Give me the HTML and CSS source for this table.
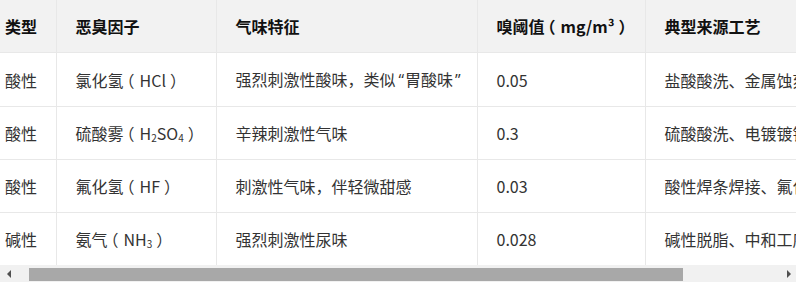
FILE: index.html
```html
<!DOCTYPE html>
<html lang="zh-CN">
<head>
<meta charset="utf-8">
<title>恶臭因子</title>
<link rel="stylesheet" href="styles.css">
</head>
<body>
<div class="table-box">
  <div class="viewport" id="viewport">
    <table class="odor-table">
      <colgroup>
        <col class="c-type">
        <col class="c-factor">
        <col class="c-desc">
        <col class="c-value">
        <col class="c-source">
      </colgroup>
      <thead>
        <tr>
          <th>类型</th>
          <th>恶臭因子</th>
          <th>气味特征</th>
          <th>嗅阈值<span class="po">（</span>mg/m³<span class="pc">）</span></th>
          <th>典型来源工艺</th>
        </tr>
      </thead>
      <tbody>
        <tr>
          <td>酸性</td>
          <td>氯化氢<span class="po">（</span>HCl<span class="pc">）</span></td>
          <td>强烈刺激性酸味，类似<span class="q qo">“</span>胃酸味<span class="q qc">”</span></td>
          <td>0.05</td>
          <td>盐酸酸洗、金属蚀刻</td>
        </tr>
        <tr>
          <td>酸性</td>
          <td>硫酸雾<span class="po">（</span>H<sub>2</sub>SO<sub>4</sub><span class="pc">）</span></td>
          <td>辛辣刺激性气味</td>
          <td>0.3</td>
          <td>硫酸酸洗、电镀镀铬</td>
        </tr>
        <tr>
          <td>酸性</td>
          <td>氟化氢<span class="po">（</span>HF<span class="pc">）</span></td>
          <td>刺激性气味，伴轻微甜感</td>
          <td>0.03</td>
          <td>酸性焊条焊接、氟化物处理</td>
        </tr>
        <tr>
          <td>碱性</td>
          <td>氨气<span class="po">（</span>NH<sub>3</sub><span class="pc">）</span></td>
          <td>强烈刺激性尿味</td>
          <td>0.028</td>
          <td>碱性脱脂、中和工序</td>
        </tr>
      </tbody>
    </table>
  </div>
  <div class="hscroll" aria-hidden="true">
    <div class="sb-btn"><span class="tri-left"></span></div>
    <div class="sb-track"><div class="sb-thumb"></div></div>
    <div class="sb-btn"><span class="tri-right"></span></div>
  </div>
</div>
<script src="script.js"></script>
</body>
</html>
```
FILE: styles.css
```css
html, body {
  margin: 0;
  padding: 0;
  background: #ffffff;
}
body {
  font-family: "Noto Sans CJK SC", "Noto Sans", sans-serif;
  font-size: 16px;
  color: #333333;
}
.table-box {
  width: 796px;
}
.viewport {
  width: 796px;
  height: 265px;
  overflow: hidden;
}
.odor-table {
  width: 932px;
  table-layout: fixed;
  border-collapse: collapse;
  border-spacing: 0;
}
.c-type { width: 70px; }
.c-factor { width: 160px; }
.c-desc { width: 261px; }
.c-value { width: 168px; }
.c-source { width: 273px; }
.odor-table th,
.odor-table td {
  padding: 15px 19px;
  line-height: 22px;
  text-align: left;
  white-space: nowrap;
  overflow: hidden;
  border-left: 1px solid #e8e8e8;
  border-bottom: 1px solid #e8e8e8;
}
.odor-table th:first-child,
.odor-table td:first-child {
  border-left: none;
}
.odor-table tbody tr:last-child td {
  border-bottom: none;
}
.odor-table th {
  background: #f2f2f2;
  color: #111111;
  font-weight: bold;
}
.odor-table sub {
  font-size: 10px;
  vertical-align: -2px;
  line-height: 0;
}
.po,
.pc {
  font-feature-settings: "halt" 1;
}
.po {
  padding: 0 5px 0 3px;
}
.pc {
  padding: 0 4px 0 4px;
}
.q {
  font-family: "Open Sans", "Noto Sans", sans-serif;
}
.qo {
  padding: 0 1px 0 3px;
}
.qc {
  padding: 0 0 0 2px;
}

/* horizontal scrollbar */
.hscroll {
  display: flex;
  height: 17px;
  background: #f1f1f1;
}
.sb-btn {
  width: 15px;
  flex: none;
  display: flex;
  align-items: center;
  justify-content: center;
}
.tri-left {
  width: 0;
  height: 0;
  border-top: 4px solid transparent;
  border-bottom: 4px solid transparent;
  border-right: 4px solid #505050;
  margin-left: 3px;
}
.tri-right {
  width: 0;
  height: 0;
  border-top: 4px solid transparent;
  border-bottom: 4px solid transparent;
  border-left: 4px solid #505050;
  margin-right: -1px;
}
.sb-track {
  flex: 1;
  display: flex;
  align-items: center;
}
.sb-thumb {
  margin-left: 14px;
  width: 654px;
  height: 13px;
  margin-top: 1px;
  background: #a8a8a8;
}
```
FILE: script.js
```js
document.getElementById('viewport').scrollLeft = 14;
```
